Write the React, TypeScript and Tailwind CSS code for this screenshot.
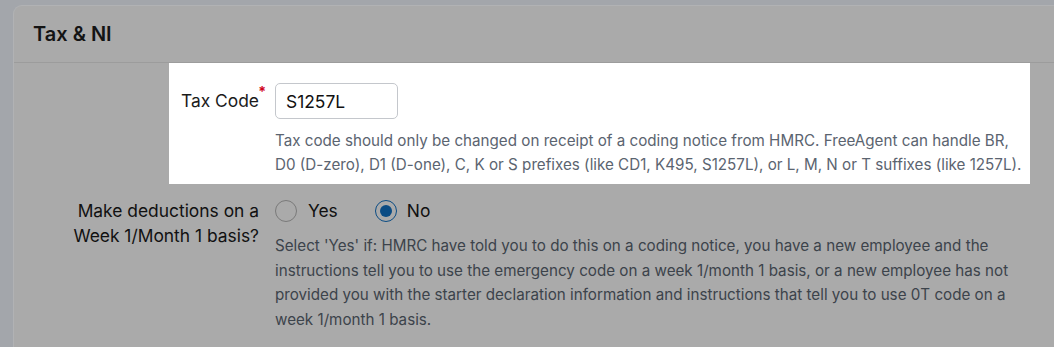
export default function App() {
  return (
    <div
      className="h-[347px] w-[1054px] overflow-hidden bg-[#a3a6ab] pt-[5px] pl-[13px]"
      style={{ fontFamily: "Inter, 'Liberation Sans', sans-serif" }}
    >
      <div className="h-[400px] rounded-tl-[9px] border-t border-l border-[#b1b2b4] bg-[#aaaaaa]">
        {/* header */}
        <div className="flex h-[57px] items-center border-b border-[#9c9c9c] pl-[19px]">
          <h2 className="text-[20px] font-semibold text-[#141414]">Tax &amp; NI</h2>
        </div>

        {/* Tax code row (highlighted) */}
        <div className="ml-[155px] flex w-[861px] bg-white pt-[20px] pb-[7px]">
          <div className="flex w-[90px] justify-end pt-[6px]">
            <label className="relative text-[17.4px] leading-[24px] text-[#1b1b1b]">
              Tax Code
              <span className="absolute -top-[9px] -right-[7px] text-[14px] font-bold text-[#d0021b]">*</span>
            </label>
          </div>
          <div className="ml-[16px] flex flex-col">
            <input
              readOnly
              value="S1257L"
              className="h-[36px] w-[123px] rounded-[5px] border border-[#c4c7cc] px-[10px] text-[17.4px] text-[#111] outline-none"
              style={{ fontFamily: "Inter, 'Liberation Sans', sans-serif" }}
            />
            <p className="mt-[10px] whitespace-nowrap text-[15.2px] leading-[24px] text-[#5b6470]">
              Tax code should only be changed on receipt of a coding notice from HMRC. FreeAgent can handle BR,
              <br />
              D0 (D-zero), D1 (D-one), C, K or S prefixes (like CD1, K495, S1257L), or L, M, N or T suffixes (like 1257L).
            </p>
          </div>
        </div>

        {/* Week 1 / Month 1 row */}
        <div className="mt-[15px] flex">
          <div className="w-[245px] text-right text-[17.4px] leading-[24.5px] text-[#111]">
            Make deductions on a
            <br />
            Week 1/Month 1 basis?
          </div>
          <div className="ml-[16px] flex flex-col">
            <div className="flex h-[24px] items-center text-[17.4px] text-[#111]">
              <span className="h-[22px] w-[22px] rounded-full border border-[#7a7a7a] bg-[#aaaaaa]" />
              <span className="ml-[11px]">Yes</span>
              <span className="ml-[37px] flex h-[22px] w-[22px] items-center justify-center rounded-full border-[1.5px] border-[#0b4c84]">
                <span className="h-[12px] w-[12px] rounded-full bg-[#0b4c84]" />
              </span>
              <span className="ml-[10px]">No</span>
            </div>
            <p className="mt-[11px] whitespace-nowrap text-[15.2px] leading-[24.6px] text-[#3c434b]">
              Select 'Yes' if: HMRC have told you to do this on a coding notice, you have a new employee and the
              <br />
              instructions tell you to use the emergency code on a week 1/month 1 basis, or a new employee has not
              <br />
              provided you with the starter declaration information and instructions that tell you to use 0T code on a
              <br />
              week 1/month 1 basis.
            </p>
          </div>
        </div>
      </div>
    </div>
  );
}
